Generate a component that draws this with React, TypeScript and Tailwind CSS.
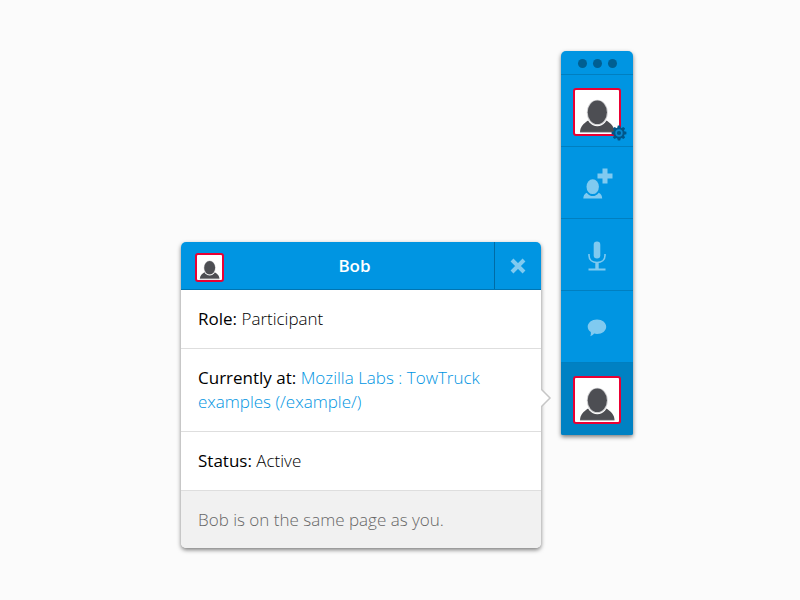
import type { ReactNode } from "react";

function Avatar({ className }: { className: string }) {
  return (
    <span className={`block shrink-0 overflow-hidden rounded-[3px] border-2 border-[#ea0033] bg-white ${className}`}>
      <svg viewBox="0 0 44 44" className="block h-full w-full" aria-hidden="true">
        <path d="M5 42C5.200 37 8 33.500 14 30H30.500C36.500 33.500 39.300 37 39.500 42Z" fill="#4d4e53" />
        <path d="M5 42.400H39.500" stroke="#b5b6b8" strokeWidth="1" />
        <ellipse cx="22.300" cy="22.700" rx="11.300" ry="13.500" fill="#fff" />
        <ellipse cx="22.300" cy="22.500" rx="10.500" ry="12.800" fill="#cfcfd1" />
        <ellipse cx="22.300" cy="22.300" rx="9.600" ry="11.800" fill="#4d4e53" />
      </svg>
    </span>
  );
}

function GearIcon() {
  return (
    <svg viewBox="-8 -8 16 16" className="absolute right-1.5 bottom-[5px] size-4" aria-hidden="true">
      <g fill="#005689">
        {[0, 45, 90, 135].map((angle) => (
          <path key={angle} d="M-1.800 -5L-1.200 -7.400H1.200L1.800 -5V5L1.200 7.400H-1.200L-1.800 5Z" transform={`rotate(${angle})`} />
        ))}
        <circle r="5.500" />
      </g>
      <circle r="2.900" fill="none" stroke="#0c87cc" strokeWidth="1.600" />
    </svg>
  );
}

function InviteIcon() {
  return (
    <svg viewBox="-2 0 32 32" className="size-8" fill="#80caf0" aria-hidden="true">
      <path d="M19.500 0.500H24.500V5.500H29.500V10.500H24.500V15.500H19.500V10.500H14.500V5.500H19.500Z" />
      <ellipse cx="9.700" cy="18.700" rx="6.200" ry="7.400" />
      <path d="M0.300 30.500C0.300 28 1.500 25.800 3.700 24.700C7 29.200 12.500 29.200 15.800 24.700C18 25.800 19.200 28 19.200 30.500Z" />
    </svg>
  );
}

function MicIcon() {
  return (
    <svg viewBox="0 0 18 30" className="h-[30px] w-[18px]" fill="none" stroke="#80caf0" aria-hidden="true">
      <rect x="5.700" y="0.500" width="6.600" height="17" rx="3.300" fill="#80caf0" stroke="none" />
      <path d="M1 13V14.500C1 19 4.500 21.500 9 21.500S17 19 17 14.500V13" strokeWidth="1.600" />
      <path d="M9 21V28" strokeWidth="3.400" />
      <path d="M0.500 28.500H17.500" strokeWidth="2" />
    </svg>
  );
}

function ChatIcon() {
  return (
    <svg viewBox="0 0 20 18" className="h-[18px] w-5" fill="#80caf0" aria-hidden="true">
      <path d="M10 0.500C15.200 0.500 19.200 3.700 19.200 7.800S15.200 15 10 15C8.900 15 8 14.900 7.100 14.600C6 16 4.700 16.900 3.300 17.200C3.900 16 4 14.500 3.800 13C1.900 11.700 0.700 9.900 0.700 7.800C0.700 3.700 4.800 0.500 10 0.500Z" />
    </svg>
  );
}

function DockButton({ label, className = "", children }: { label: string; className?: string; children: ReactNode }) {
  return (
    <button
      type="button"
      aria-label={label}
      className={`relative flex h-[72px] w-full items-center justify-center border-[#007fc0] pt-0.5 ${className}`}
    >
      {children}
    </button>
  );
}

function Row({ children }: { children: ReactNode }) {
  return <div className="border-b border-[#dedede] p-[17px]">{children}</div>;
}

export default function App() {
  return (
    <main className="flex min-h-screen items-start justify-center gap-5 bg-[#fbfbfb] pt-[51px] pl-[14px] font-['Open_Sans',sans-serif] text-[17px] leading-6 font-light text-black">
      <section
        aria-label="Bob"
        className="relative mt-[191px] w-[360px] rounded-[5px] shadow-[0_2px_4px_rgba(0,0,0,0.5)]"
      >
        <header className="flex h-12 items-stretch rounded-t-[5px] border-b border-[#0075b2] bg-[#0095e2]">
          <div className="flex flex-1 items-center pt-1 pl-[14px]">
            <Avatar className="size-[29px]" />
            <h1 className="flex-1 pr-[9px] pb-1 text-center font-semibold text-white">Bob</h1>
          </div>
          <button
            type="button"
            aria-label="Close"
            className="flex w-[47px] items-center justify-center border-l border-[#006ba5]"
          >
            <svg viewBox="0 0 16 16" className="size-4" stroke="#80caf0" strokeWidth="4" aria-hidden="true">
              <path d="M2 2L14 14M14 2L2 14" />
            </svg>
          </button>
        </header>
        <div className="bg-white">
          <Row>
            <span className="font-normal">Role:</span> Participant
          </Row>
          <Row>
            <span className="font-normal">Currently at:</span>{" "}
            <a href="#example" className="text-[#0095e2]">
              Mozilla Labs : TowTruck examples (/example/)
            </a>
          </Row>
          <Row>
            <span className="font-normal">Status:</span> Active
          </Row>
        </div>
        <p className="rounded-b-[5px] bg-[#f1f1f1] px-[17px] pt-[17px] pb-4 text-[#666]">
          Bob is on the same page as you.
        </p>
        <svg viewBox="0 0 12 20" className="absolute top-[146px] left-full h-5 w-3" aria-hidden="true">
          <path d="M-2 1H0L9 10L0 19H-2Z" fill="#fff" />
          <path d="M0 1L9 10L0 19" fill="none" stroke="#c6c6c6" strokeWidth="1.500" />
        </svg>
      </section>

      <nav
        aria-label="TowTruck"
        className="w-[72px] overflow-hidden rounded-t-[5px] rounded-b-xs bg-[#0095e2] shadow-[0_2px_4px_rgba(0,0,0,0.5)]"
      >
        <div className="flex h-6 items-center justify-center gap-1.5 border-b border-[#007fc0] pt-px">
          <span className="size-[9px] rounded-full bg-[#005f92]" />
          <span className="size-[9px] rounded-full bg-[#005f92]" />
          <span className="size-[9px] rounded-full bg-[#005f92]" />
        </div>
        <DockButton label="Your profile" className="border-b">
          <Avatar className="size-12" />
          <GearIcon />
        </DockButton>
        <DockButton label="Invite a friend" className="border-b">
          <InviteIcon />
        </DockButton>
        <DockButton label="Microphone" className="border-b">
          <MicIcon />
        </DockButton>
        <DockButton label="Chat" className="border-b">
          <ChatIcon />
        </DockButton>
        <DockButton label="Bob" className="bg-[#0081c3]">
          <Avatar className="size-12" />
        </DockButton>
      </nav>
    </main>
  );
}
